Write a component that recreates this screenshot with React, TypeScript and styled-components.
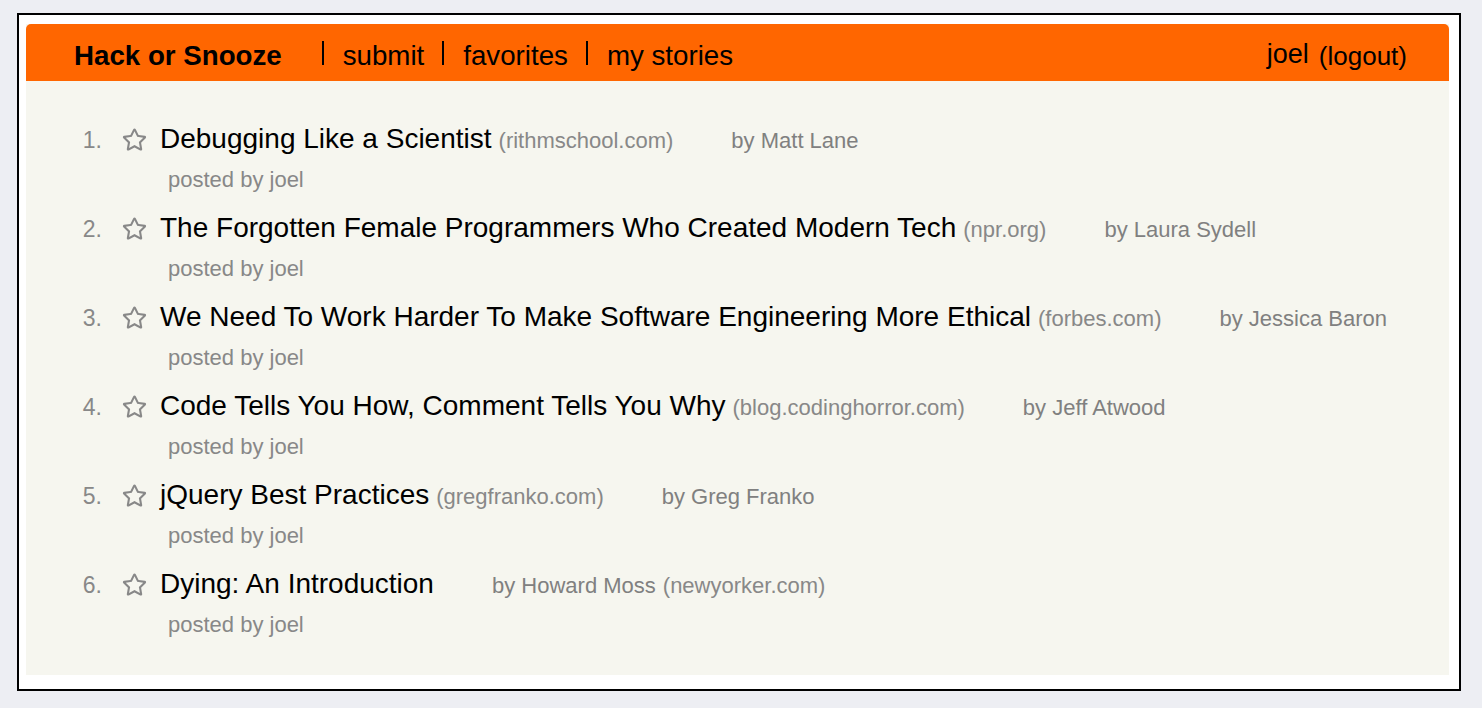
import React from "react";
import styled, { createGlobalStyle } from "styled-components";
import { FaRegStar } from "react-icons/fa";

const GlobalStyle = createGlobalStyle`
  html, body {
    margin: 0;
    padding: 0;
    background: #edeef3;
    font-family: "Liberation Sans", Helvetica, Arial, sans-serif;
  }
  * { box-sizing: border-box; }
`;

const Page = styled.div`
  padding: 13px 21px 17px 17px;
`;

const Frame = styled.div`
  border: 2px solid #000;
  background: #fff;
  padding: 9px 10px 14px 7px;
`;

const Container = styled.div`
  background: #f6f6ef;
`;

const Nav = styled.nav`
  display: flex;
  align-items: baseline;
  height: 57px;
  padding: 6px 42px 0 48px;
  line-height: 51px;
  background: #ff6600;
  border-radius: 5px 5px 0 0;
  font-size: 27.7px;
  color: #000;
`;

const Brand = styled.a`
  font-weight: bold;
  margin-right: 22px;
  color: #000;
  text-decoration: none;
`;

const Sep = styled.span`
  display: inline-block;
  width: 2px;
  height: 24px;
  background: #000;
  margin: 0 19px 0 18px;
`;

const NavLink = styled.a`
  color: #000;
  text-decoration: none;
`;

const UserArea = styled.div`
  margin-left: auto;
  display: flex;
  align-items: baseline;
`;

const UserName = styled.a`
  font-size: 27px;
  color: #000;
  text-decoration: none;
  position: relative;
  top: -2px;
`;

const Logout = styled.a`
  font-size: 26px;
  margin-left: 10px;
  color: #000;
  text-decoration: none;
`;

const List = styled.ol`
  list-style: none;
  margin: 0;
  padding: 38px 0 29px 46px;
  display: flex;
  flex-direction: column;
  gap: 7px;
`;

const Story = styled.li`
  display: block;
`;

const MainRow = styled.div`
  font-size: 28px;
  line-height: 40px;
  white-space: nowrap;
`;

const Num = styled.span`
  display: inline-block;
  width: 30px;
  text-align: right;
  font-size: 23px;
  color: #888;
`;

const StarButton = styled.span`
  display: inline-block;
  margin-left: 20px;
  margin-right: 13px;
  color: #888;
  vertical-align: -4px;
  line-height: 0;
  svg { display: block; }
`;

const Title = styled.a`
  color: #000;
  text-decoration: none;
`;

const Host = styled.small`
  font-size: 22px;
  color: #888;
  margin-left: 7px;
`;

const Author = styled.small`
  font-size: 22px;
  color: #808080;
  margin-left: 58px;
`;

const SubRow = styled.div`
  font-size: 22px;
  line-height: 38px;
  color: #888;
  margin-left: 96px;
  margin-bottom: 2px;
`;

type StoryData = {
  title: string;
  host: string;
  author: string;
  hostAfterAuthor?: boolean;
};

const stories: StoryData[] = [
  { title: "Debugging Like a Scientist", host: "rithmschool.com", author: "Matt Lane" },
  { title: "The Forgotten Female Programmers Who Created Modern Tech", host: "npr.org", author: "Laura Sydell" },
  { title: "We Need To Work Harder To Make Software Engineering More Ethical", host: "forbes.com", author: "Jessica Baron" },
  { title: "Code Tells You How, Comment Tells You Why", host: "blog.codinghorror.com", author: "Jeff Atwood" },
  { title: "jQuery Best Practices", host: "gregfranko.com", author: "Greg Franko" },
  { title: "Dying: An Introduction", host: "newyorker.com", author: "Howard Moss", hostAfterAuthor: true },
];

export default function App() {
  return (
    <>
      <GlobalStyle />
      <Page>
        <Frame>
          <Container>
            <Nav>
              <Brand href="#">Hack or Snooze</Brand>
              <Sep />
              <NavLink href="#">submit</NavLink>
              <Sep />
              <NavLink href="#">favorites</NavLink>
              <Sep />
              <NavLink href="#">my stories</NavLink>
              <UserArea>
                <UserName href="#">joel</UserName>
                <Logout href="#">(logout)</Logout>
              </UserArea>
            </Nav>
            <List>
              {stories.map((s, i) => (
                <Story key={s.title}>
                  <MainRow>
                    <Num>{i + 1}.</Num>
                    <StarButton>
                      <FaRegStar size={25} />
                    </StarButton>
                    <Title href="#">{s.title}</Title>
                    {!s.hostAfterAuthor && <Host>({s.host})</Host>}
                    <Author>by {s.author}</Author>
                    {s.hostAfterAuthor && <Host>({s.host})</Host>}
                  </MainRow>
                  <SubRow>posted by joel</SubRow>
                </Story>
              ))}
            </List>
          </Container>
        </Frame>
      </Page>
    </>
  );
}
